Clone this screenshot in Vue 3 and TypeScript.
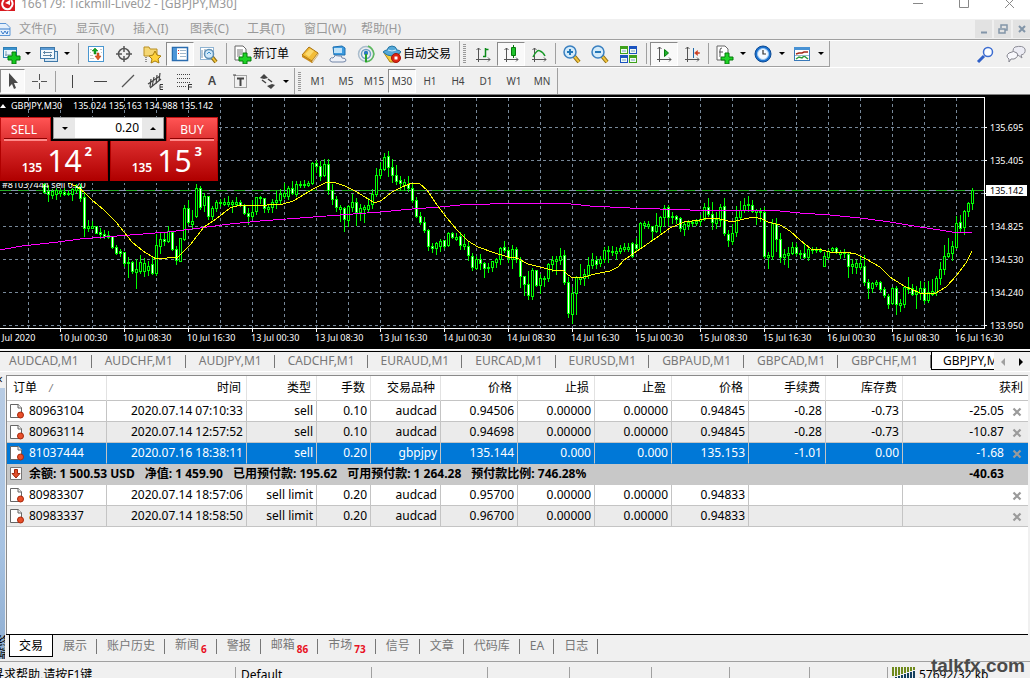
<script setup lang="ts">
import { ref } from 'vue'

interface Tool {
  kind: 'btn' | 'drop' | 'sep' | 'text'
  icon?: string
  label?: string
  cls?: string
}

const icons: Record<string, string> = {
  newChart:
    '<rect x="2.500" y="3.500" width="13" height="10" fill="#eef6fc" stroke="#2f7fb5"/><path d="M3 4h12v2h-12z" fill="#3c93cf"/><path d="M5 7v5M4 11h6" stroke="#7a9db5" fill="none"/><path d="M11 8h4v4h4v4h-4v4h-4v-4h-4v-4h4z" fill="#14c81e" stroke="#067a0c"/>',
  profiles:
    '<rect x="6.500" y="7.500" width="13" height="10" fill="#d3e6f5" stroke="#3f78a8"/><rect x="2.500" y="3.500" width="14" height="11" fill="#f4f9fd" stroke="#3f78a8"/><path d="M3 4h13v2h-13z" fill="#5b9bd5"/><path d="M5 8.500h9M5 11.500h9M6.500 7v3M12.500 10v3" stroke="#5f86a5"/>',
  market:
    '<rect x="2.500" y="2.500" width="15" height="15" fill="#fff" stroke="#4a97d0"/><path d="M4 5.500h2M4 8.500h1M4 11.500h3M4 14.500h4M14 5.500h2M15 8.500h1" stroke="#c4c4c4"/><path d="M9 4l3 3h-2v3h-2v-3h-2z" fill="#12a51f" stroke="#067a0c" stroke-width=".5"/><path d="M11 9h2v3h2l-3 4-3-4h2z" fill="#e2571e" stroke="#a5350c" stroke-width=".5"/>',
  cross:
    '<circle cx="10" cy="10" r="5.500" fill="none" stroke="#555" stroke-width="1.500"/><path d="M10 2v6M10 12v6M2 10h6M12 10h6" stroke="#555" stroke-width="1.500"/>',
  favorite:
    '<path d="M2 3h5l1 2h7v7h-13z" fill="#f5d774" stroke="#b98f22"/><path d="M4 13v5" stroke="#333" stroke-dasharray="1 1"/><path d="M13 7l2 4 4 1-3 3 1 4-4-2-4 2 1-4-3-3 4-1z" fill="#ffd23a" stroke="#a97f0c"/>',
  terminal:
    '<rect x="2.500" y="3.500" width="15" height="13" fill="#fff" stroke="#2a6db0" stroke-width="1.500"/><path d="M3 4h4v12h-4z" fill="#4d95d8"/><path d="M8 6.500h1M8 9.500h1" stroke="#d22"/><path d="M10 6.500h6M10 9.500h6M10 12.500h6" stroke="#9fb8cc"/>',
  tester:
    '<rect x="2.500" y="3.500" width="13" height="12" fill="#fff" stroke="#8fb3d1"/><path d="M4 6v8M7 5v5M13 5v3" stroke="#7a93a8"/><path d="M14 13l4 5" stroke="#8a6a10" stroke-width="4"/><path d="M14 13l4 5" stroke="#f1c33c" stroke-width="2"/><circle cx="11" cy="10" r="4.500" fill="#cfe8fa" stroke="#5d8fb5" stroke-width="1.500"/><path d="M9 10l2-2 2 2" stroke="#3b8ec9" fill="none"/>',
  order:
    '<path d="M3 2h8l3 3v11h-11z" fill="#fff" stroke="#666"/><path d="M5 6h6M5 8h6M5 10h5M5 12h3" stroke="#777"/><path d="M11 9h4v4h4v4h-4v3h-4v-3h-4v-4h4z" fill="#1fd326" stroke="#067a0c"/>',
  book:
    '<path d="M2 11l7-8 9 6-6 8z" fill="#f3bd38" stroke="#a8710f"/><path d="M2 11l10 6v2l-10-6z" fill="#c98a17"/><path d="M12 17l6-8v2l-6 8z" fill="#fff3cf" stroke="#a8710f" stroke-width=".5"/><path d="M5 10l5-5 4 2-5 6z" fill="#fbd96d"/>',
  cloud:
    '<path d="M5 3l9-1 3 2v7h-11z" fill="#3d9be0" stroke="#1d6fb0"/><path d="M6 4h8v5h-8z" fill="#bfe2f8"/><path d="M4 18q-3-1-2-3 1-2 3-1 2-4 6-2 3-1 3 2 4 0 4 2 0 2-3 2z" fill="#eef1f8" stroke="#7386a8"/>',
  signal:
    '<circle cx="10" cy="10" r="7.500" fill="none" stroke="#a9bccc" stroke-width="1.500"/><circle cx="10" cy="10" r="4.500" fill="none" stroke="#6fa0c4" stroke-width="1.500"/><path d="M10 10v8q7-1 8-8-1-6-6-8" fill="none" stroke="#5cba5c" stroke-width="1.500"/><circle cx="10" cy="9" r="2.200" fill="#2a7bbf"/><path d="M10 10v8" stroke="#28a428" stroke-width="2"/>',
  auto:
    '<path d="M2 9h16l-5 9h-5z" fill="#f5cf3d" stroke="#ad8212"/><path d="M1 8q2-2 4-2 1-4 5-4t5 4q3 0 4 2-4 4-9 4t-9-4z" fill="#55a9d8" stroke="#2576a5"/><path d="M6 6q4 2 8 0" stroke="#d7effc" fill="none"/><circle cx="14" cy="14" r="4.500" fill="#df2612" stroke="#a0150a"/><path d="M12.500 12.500h3v3h-3z" fill="#fff"/>',
  bars:
    '<path d="M5.500 4v14M3 15.500h14" stroke="#555"/><path d="M3.500 6l2-2 2 2M15 13.500l2 2-2 2" stroke="#555" fill="none"/><path d="M12.500 4v9M12.500 5.500h3M10 12.500h3" stroke="#0a8a18" stroke-width="1.500"/>',
  candles:
    '<path d="M5.500 4v14M3 15.500h14" stroke="#555"/><path d="M3.500 6l2-2 2 2M15 13.500l2 2-2 2" stroke="#555" fill="none"/><path d="M12.500 1v13" stroke="#067a0c"/><path d="M10.500 3.500h4v8h-4z" fill="#1fc32c" stroke="#067a0c"/>',
  line:
    '<path d="M5.500 4v14M3 15.500h14" stroke="#555"/><path d="M3.500 6l2-2 2 2M15 13.500l2 2-2 2" stroke="#555" fill="none"/><path d="M4 13q4-8 7-6 3 1 5 5" stroke="#1a9a2a" fill="none" stroke-width="1.500"/>',
  zoomIn:
    '<path d="M12 12l5 6" stroke="#8a6a10" stroke-width="4"/><path d="M12 12l5 6" stroke="#f1c33c" stroke-width="2"/><circle cx="8" cy="8" r="6" fill="#d4ebfa" stroke="#3a80c0" stroke-width="1.500"/><path d="M8 5v6M5 8h6" stroke="#2478b8" stroke-width="2"/>',
  zoomOut:
    '<path d="M12 12l5 6" stroke="#8a6a10" stroke-width="4"/><path d="M12 12l5 6" stroke="#f1c33c" stroke-width="2"/><circle cx="8" cy="8" r="6" fill="#d4ebfa" stroke="#3a80c0" stroke-width="1.500"/><path d="M5 8h6" stroke="#2478b8" stroke-width="2"/>',
  tile:
    '<path d="M2 2h8v8h-8zM11 11h8v8h-8z" fill="#3fa21c"/><path d="M11 2h8v8h-8zM2 11h8v8h-8z" fill="#1c54c0"/><path d="M3 5h6v4h-6zM12 5h6v4h-6zM3 14h6v4h-6zM12 14h6v4h-6z" fill="#f2fbf2"/><path d="M4 7h4M13 7h4M4 16h4M13 16h4" stroke="#79a0c4"/>',
  scroll:
    '<path d="M5.500 3v15M3 15.500h14" stroke="#555"/><path d="M3.500 5l2-2 2 2M15 13.500l2 2-2 2" stroke="#555" fill="none"/><path d="M10.500 5.500l4 3.500-4 3.500z" fill="#1fb32c" stroke="#067a0c"/>',
  shift:
    '<path d="M5.500 3v15M3 15.500h14" stroke="#555"/><path d="M3.500 5l2-2 2 2M15 13.500l2 2-2 2" stroke="#555" fill="none"/><path d="M11.500 4v10" stroke="#1f68a8"/><path d="M12.500 9l3-2.500v2h2v1h-2v2z" fill="#c9381b" stroke="#c9381b" stroke-width=".5"/>',
  indicator:
    '<path d="M3 2h8l3 3v11h-11z" fill="#fff" stroke="#666"/><path d="M6 13v-7q0-2 2-2M5 8h4" stroke="#555" fill="none"/><path d="M11 9h4v4h4v3h-4v4h-4v-4h-4v-3h4z" fill="#1fd326" stroke="#067a0c"/>',
  clock:
    '<circle cx="10" cy="10" r="8" fill="#1b72d0" stroke="#0c4a94"/><circle cx="10" cy="10" r="5.500" fill="#f3f9ff" stroke="#9cc8f2"/><path d="M10 6v4h3" stroke="#333" fill="none" stroke-width="1.200"/>',
  template:
    '<rect x="2.500" y="3.500" width="15" height="13" fill="#fff" stroke="#3878b8"/><path d="M2 3h16v3h-16z" fill="#4892d4"/><path d="M4 10l3-1 3 0 2-1 4 0" stroke="#a32a1a" fill="none" stroke-width="1.500"/><path d="M4 15l3-2 3 1 2-2 4 3" stroke="#2a9a3a" fill="none" stroke-width="1.500"/><path d="M3 11.500h14" stroke="#9bc"/>',
  arrow: '<path d="M6 2v14l3-3 2 5 2-1-2-5h4z" fill="#4a4a4a"/>',
  crosshair: '<path d="M10.500 3v6M10.500 12v6M3 10.500h6M12 10.500h6" stroke="#555"/>',
  vline: '<path d="M10.500 4v13" stroke="#444"/>',
  hline: '<path d="M4 10.500h13" stroke="#444"/>',
  trend: '<path d="M4 16l12-12" stroke="#555" stroke-width="1.200"/>',
  channel:
    '<path d="M2 13l12-8M4 17l11-9M5 8l-1 8M8 6l-2 10M11 4l-1 9M14 2l-1 8" stroke="#444" stroke-width="1.200"/><path d="M17 13.500h-3v5h3M14 16h3" stroke="#333" fill="none"/>',
  fib:
    '<path d="M3 3.500h14M3 7.500h14M3 11.500h14M3 15.500h9" stroke="#444" stroke-dasharray="1 1"/><path d="M18 13.500h-3.500v5.500M15 16h3" stroke="#333" fill="none"/>',
  label:
    '<rect x="4.500" y="4.500" width="12" height="12" fill="none" stroke="#555" stroke-dasharray="1 1"/><path d="M7 7.500h7M10.500 7v8" stroke="#444" stroke-width="2"/><path d="M3 4h3" stroke="#444"/>',
  arrows:
    '<path d="M3 7l4-4 4 4-4 1z" fill="#444"/><path d="M10 15l5-2 3 1-4 4z" fill="#444"/><path d="M5 9l4 3M11 8l4 3" stroke="#444" stroke-width="1.500"/>',
  search:
    '<path d="M8 12l-6 6" stroke="#2f60c8" stroke-width="3"/><circle cx="12" cy="8" r="4.500" fill="#fbfdff" stroke="#3c6cd0" stroke-width="1.500"/>',
  chat:
    '<path d="M9 3q8-2 10 2 1 5-4 6l1 3-4-3q-5-1-5-4 0-3 2-4z" fill="#ececf4" stroke="#8c8c96"/><path d="M3 9q5-3 8 0 2 4-3 6h-3l-2 3v-3q-4-3 0-6z" fill="#f8f8fc" stroke="#85858f"/>',
}

const btn = (icon: string, cls = ''): Tool => ({ kind: 'btn', icon, cls })
const drop: Tool = { kind: 'drop' }
const sep: Tool = { kind: 'sep' }

const standardTools: Tool[] = [
  btn('newChart', 'narrow'), drop, btn('profiles', 'mid'), drop, sep,
  btn('market'), btn('cross'), btn('favorite'), btn('terminal', 'pressed'), btn('tester'), sep,
  { kind: 'text', icon: 'order', label: '新订单' },
  btn('book'), btn('cloud'), btn('signal'),
  { kind: 'text', icon: 'auto', label: '自动交易' },
]
const chartTools: Tool[] = [
  btn('bars'), btn('candles', 'pressed'), btn('line'), { kind: 'sep', cls: 'tight' },
  btn('zoomIn'), btn('zoomOut'), btn('tile'), sep,
  btn('scroll', 'pressed'), btn('shift'), { kind: 'sep', cls: 'tight' },
  btn('indicator', 'mid'), drop, btn('clock', 'mid'), drop, btn('template', 'mid'), drop,
]
const drawTools: Tool[] = [
  btn('arrow', 'mid pressed'), btn('crosshair'), { kind: 'sep', cls: 'tight' },
  btn('vline'), btn('hline'), btn('trend'), btn('channel'), btn('fib'),
  { kind: 'text', label: 'A', cls: 'letter' }, btn('label'), btn('arrows', 'mid'), drop,
]

const menus = ['文件(F)', '显示(V)', '插入(I)', '图表(C)', '工具(T)', '窗口(W)', '帮助(H)']
const frames = ['M1', 'M5', 'M15', 'M30', 'H1', 'H4', 'D1', 'W1', 'MN']
const frame = ref('M30')
const lots = ref('0.20')

/* Candles: high, open/close top, open/close bottom, low, 1 = rising, 0 = falling */
const STEP = 4
const FIRST_X = 44
const candleRows = `
88 89 97 98 0|90 96 99 106 0|94 96 100 103 1|93 95 99 104 1|94 96 98 101 1|93 97 99 100 0|95 98 99 100 1|93 94 99 105 1
89 91 95 97 1|89 91 103 106 0|98 102 133 141 0|125 131 133 136 1|126 131 133 133 1|131 131 138 138 0|133 137 139 143 0|135 139 141 143 0
136 140 142 143 0|141 141 152 153 0|150 152 158 159 0|154 156 158 161 0|157 157 168 171 0|162 167 168 182 0|166 167 176 178 0|164 174 177 193 1
160 167 176 178 1|163 168 176 181 1|166 171 175 180 1|162 169 178 179 0|139 150 178 180 1|137 144 151 158 1|137 144 146 150 0|131 136 146 147 1
136 137 154 155 0|151 154 165 169 0|143 143 166 166 1|110 113 144 145 1|105 113 127 129 0|115 126 129 134 1|89 93 121 122 1|91 93 112 114 0
98 101 110 116 1|101 101 121 124 0|111 113 121 124 1|105 107 113 116 1|104 107 108 111 1|103 107 109 110 1|101 107 109 111 1|105 107 109 117 1
102 107 109 110 1|105 107 110 111 0|109 110 118 119 0|113 118 121 129 0|105 117 121 123 1|102 102 116 119 1|101 102 103 108 1|103 103 113 117 0
110 112 114 117 1|104 107 112 117 1|96 105 107 113 1|94 99 105 108 1|88 98 101 103 1|91 93 101 104 1|86 93 98 99 0|86 89 99 101 1
86 89 90 92 1|85 89 90 92 1|86 88 90 91 1|67 68 88 89 1|65 68 71 77 0|66 71 81 85 0|64 69 80 81 1|64 69 95 99 0
89 95 104 109 0|101 104 112 116 0|110 112 114 126 1|112 113 124 136 0|110 111 125 131 1|99 107 112 116 1|103 107 117 130 0|109 113 117 125 1
110 112 114 127 1|103 110 114 117 1|94 99 109 113 1|73 80 99 101 1|67 74 80 83 1|58 62 74 75 1|56 61 72 81 0|64 72 80 87 0
70 80 86 89 0|81 85 88 95 0|84 87 90 95 1|81 89 93 96 0|89 93 105 107 0|102 105 121 122 0|117 121 127 129 0|122 127 135 137 0
134 135 151 155 0|148 151 153 157 0|147 148 153 159 1|144 146 151 156 1|145 145 151 153 0|137 138 150 151 1|137 138 142 143 0|138 142 144 145 1
137 141 150 154 0|139 149 151 154 1|147 151 160 165 0|158 161 172 175 0|161 164 173 174 1|159 164 168 174 0|167 168 173 182 0|168 172 173 177 1
166 166 172 176 1|163 164 167 172 1|152 153 164 169 1|146 152 155 157 0|152 155 163 167 0|150 154 164 173 1|152 154 164 167 0|162 165 181 192 0
181 181 189 200 0|176 189 200 204 0|173 175 201 204 1|175 175 190 191 0|179 183 190 198 1|181 183 184 191 1|168 169 183 186 1|161 165 169 176 1
161 164 166 179 1|153 161 165 169 1|155 160 187 189 0|182 187 218 222 0|192 198 219 228 1|181 182 198 219 1|169 182 184 189 1|174 179 183 190 1
162 170 180 183 1|158 165 170 173 1|161 165 169 173 0|161 164 168 171 1|152 155 164 167 1|151 155 156 167 1|151 156 157 160 1|152 156 158 164 1
150 153 156 158 1|148 152 154 156 1|148 152 154 156 1|147 148 161 162 0|143 149 153 156 0|127 128 153 153 1|126 128 130 133 1|126 129 131 133 1
131 131 136 145 0|118 130 136 137 1|121 122 131 137 1|110 113 122 131 1|110 112 122 130 0|117 121 122 128 1|120 121 124 128 0|122 123 133 136 0
127 129 134 140 1|125 127 130 134 1|125 127 128 131 1|124 126 128 130 1|120 124 126 130 1|108 112 124 125 1|103 112 119 121 0|107 119 127 134 0
117 124 128 133 1|109 112 125 131 1|103 111 138 140 0|135 139 145 151 0|129 138 146 149 1|111 122 137 141 1|106 115 122 123 1|103 110 115 117 1
101 109 110 116 1|105 110 116 117 0|114 115 117 129 1|113 116 117 126 1|112 117 161 163 0|157 160 162 173 1|124 128 161 164 1|123 129 144 156 0
138 144 162 167 0|154 159 162 169 1|152 158 160 172 1|147 152 158 159 1|148 152 158 160 0|155 158 159 163 1|149 158 162 163 0|153 154 162 165 1
152 154 155 158 1|152 154 155 157 1|153 155 156 157 1|157 161 171 171 1|154 156 162 164 1|152 153 155 157 1|152 153 157 158 0|155 157 159 163 1
154 157 158 162 1|158 159 171 182 0|164 169 171 178 1|165 168 172 178 1|162 168 172 174 1|160 171 187 190 0|184 187 193 203 0|187 188 193 197 1
185 187 189 191 1|186 187 194 196 0|192 194 200 202 0|199 201 209 213 0|192 193 208 209 1|191 193 209 219 0|204 208 210 216 1|191 192 209 212 1
182 192 194 198 1|189 193 199 200 0|191 197 199 213 1|186 193 198 204 1|187 193 205 208 0|186 197 205 207 1|184 196 199 200 1|181 183 197 200 1
167 174 183 189 1|150 161 174 179 1|143 158 161 162 1|146 151 158 165 1|121 128 152 153 1|120 127 133 137 0|115 116 132 139 1|107 108 116 121 1
93 95 108 114 1`
const candles = candleRows
  .trim()
  .split(/[|\n]/)
  .map((row, i) => {
    const [high, top, bottom, low, up] = row.split(' ').map(Number)
    return { x: FIRST_X + i * STEP, high, top, bottom, low, up: up === 1 }
  })

const fastAverage =
  '68,88 76,91 84,97 92,105 104,115 116,127 124,137 132,147 143,156 156,164 178,162 190,150 204,132 216,124 230,113 240,110 252,111 283,109 293,106 305,99 315,93 325,88 333,87 345,91 357,97 368,104 375,108 382,105 392,97 402,92 412,88 420,89 427,95 437,110 447,123 457,135 468,146 478,152 492,157 508,162 517,163 528,169 540,172 552,175 563,175 568,180 573,183 584,182 595,179 610,176 618,172 624,165 640,154 656,143 670,133 684,127 700,125 708,123 720,124 732,127 744,124 754,122 762,124 768,127 780,130 790,136 800,145 811,154 822,155 830,157 845,157 856,159 866,164 880,172 890,182 904,191 920,198 934,199 946,192 957,180 966,168 972,156'
const slowAverage =
  '0,155 22,151 58,147 80,144 130,140 168,137 200,133 230,129 260,126 300,123 340,120 380,117 412,114 440,112 460,110 490,109 512,108 562,108 590,111 630,113 660,114 690,115 730,115 770,115 800,118 830,120 860,123 890,127 920,132 940,135 952,137 972,138'

const gridX = Array.from({ length: 30 }, (_, i) => 28 + i * 32)
const prices = ['135.695', '135.405', '', '134.825', '134.530', '134.240', '133.950'].map((text, i) => ({
  text,
  y: 32 + i * 33,
}))
const dates = [
  '10 Jul 00:30', '10 Jul 08:30', '10 Jul 16:30', '13 Jul 00:30', '13 Jul 08:30', '13 Jul 16:30',
  '14 Jul 00:30', '14 Jul 08:30', '14 Jul 16:30', '15 Jul 00:30', '15 Jul 08:30', '15 Jul 16:30',
  '16 Jul 00:30', '16 Jul 08:30', '16 Jul 16:30',
].map((text, i) => ({ text, x: 59 + i * 64 }))

const chartTabs = [
  'AUDCAD,M1', 'AUDCHF,M1', 'AUDJPY,M1', 'CADCHF,M1', 'EURAUD,M1', 'EURCAD,M1',
  'EURUSD,M1', 'GBPAUD,M1', 'GBPCAD,M1', 'GBPCHF,M1',
]

const columns = ['时间', '类型', '手数', '交易品种', '价格', '止损', '止盈', '价格', '手续费', '库存费', '获利']

interface Order {
  id: string
  cells: string[]
  fees?: string[]
  profit?: string
  selected?: boolean
}
const openOrders: Order[] = [
  { id: '80963104', cells: ['2020.07.14 07:10:33', 'sell', '0.10', 'audcad', '0.94506', '0.00000', '0.00000', '0.94845'], fees: ['-0.28', '-0.73'], profit: '-25.05' },
  { id: '80963114', cells: ['2020.07.14 12:57:52', 'sell', '0.10', 'audcad', '0.94698', '0.00000', '0.00000', '0.94845'], fees: ['-0.28', '-0.73'], profit: '-10.87' },
  { id: '81037444', cells: ['2020.07.16 18:38:11', 'sell', '0.20', 'gbpjpy', '135.144', '0.000', '0.000', '135.153'], fees: ['-1.01', '0.00'], profit: '-1.68', selected: true },
]
const pendingOrders: Order[] = [
  { id: '80983307', cells: ['2020.07.14 18:57:06', 'sell limit', '0.20', 'audcad', '0.95700', '0.00000', '0.00000', '0.94833'] },
  { id: '80983337', cells: ['2020.07.14 18:58:50', 'sell limit', '0.20', 'audcad', '0.96700', '0.00000', '0.00000', '0.94833'] },
]
const summary = ['余额: 1 500.53 USD', '净值: 1 459.90', '已用预付款: 195.62', '可用预付款: 1 264.28', '预付款比例: 746.28%']

const terminalTabs = [
  { name: '展示' }, { name: '账户历史' }, { name: '新闻', badge: '6' }, { name: '警报' },
  { name: '邮箱', badge: '86' }, { name: '市场', badge: '73' }, { name: '信号' }, { name: '文章' },
  { name: '代码库' }, { name: 'EA' }, { name: '日志' },
]
</script>

<template>
  <div class="app">
    <header class="title-bar">
      <svg class="logo" viewBox="0 0 15 11" aria-hidden="true">
        <path d="M0 0h15v11h-15z" fill="#d8191f" />
        <path d="M4 0a5 5 0 0 0 7 8M11 0a5 5 0 0 1-1 8" fill="none" stroke="#fff" stroke-width="2" />
        <path d="M5 3l5-3v5z" fill="#fff" />
      </svg>
      <span class="title">166179: Tickmill-Live02 - [GBPJPY,M30]</span>
      <button class="win" aria-label="Minimize"><svg viewBox="0 0 12 10"><path d="M1 3.500h10" stroke="#888" /></svg></button>
      <button class="win" aria-label="Maximize"><svg viewBox="0 0 12 10"><path d="M1.500-2v9.500h9v-9.500" fill="none" stroke="#888" /></svg></button>
      <button class="win" aria-label="Close"><svg viewBox="0 0 12 10"><path d="M1 8l9-9M1-1l9 9" stroke="#888" /></svg></button>
    </header>

    <nav class="menu-bar">
      <svg class="doc-icon" viewBox="0 0 11 14" aria-hidden="true">
        <path d="M0 1.500h6l4 4v8h-10" fill="#e4f0fc" stroke="#5b95d5" />
        <path d="M0 7h10M1 9l2 3 2-3 2 3 1-3" fill="none" stroke="#3478c8" />
      </svg>
      <button v-for="m in menus" :key="m" class="menu">{{ m }}</button>
      <div class="mdi">
        <button aria-label="Minimize chart"><svg viewBox="0 0 12 12"><path d="M3 9.500h6" stroke="#8295a8" stroke-width="2" /></svg></button>
        <button aria-label="Restore chart"><svg viewBox="0 0 12 12"><path d="M2 6h6v4h-6zM4 5v-3h6v5h-2" fill="none" stroke="#8295a8" stroke-width="1.500" /></svg></button>
        <button aria-label="Close chart"><svg viewBox="0 0 12 12"><path d="M3 3l6 6M9 3l-6 6" stroke="#8295a8" stroke-width="2" /></svg></button>
      </div>
    </nav>

    <div class="bar-row top-row">
      <div v-for="(group, g) in [standardTools, chartTools]" :key="g" class="bar">
        <span v-if="g > 0" class="grip"></span>
        <template v-for="(t, i) in group" :key="i">
          <span v-if="t.kind === 'sep'" class="sep" :class="t.cls"></span>
          <button v-else-if="t.kind === 'drop'" class="drop" aria-label="More"></button>
          <button v-else class="tool" :class="[t.cls, { wide: t.kind === 'text' }]" :aria-label="t.label || t.icon">
            <svg v-if="t.icon" viewBox="0 0 20 20" v-html="icons[t.icon]"></svg>
            <span v-if="t.label">{{ t.label }}</span>
          </button>
        </template>
      </div>
      <div class="side">
        <button class="tool" aria-label="Search"><svg viewBox="0 0 20 20" v-html="icons.search"></svg></button>
        <button class="tool" aria-label="Chat"><svg viewBox="0 0 20 20" v-html="icons.chat"></svg></button>
      </div>
    </div>

    <div class="bar-row">
      <div class="bar">
        <template v-for="(t, i) in drawTools" :key="i">
          <span v-if="t.kind === 'sep'" class="sep" :class="t.cls"></span>
          <button v-else-if="t.kind === 'drop'" class="drop" aria-label="More"></button>
          <button v-else class="tool" :class="t.cls" :aria-label="t.label || t.icon">
            <svg v-if="t.icon" viewBox="0 0 20 20" v-html="icons[t.icon]"></svg>
            <span v-if="t.label">{{ t.label }}</span>
          </button>
        </template>
      </div>
      <div class="bar">
        <span class="grip"></span>
        <button v-for="f in frames" :key="f" class="tool frame" :class="{ pressed: f === frame }" @click="frame = f">{{ f }}</button>
      </div>
    </div>

    <main class="chart">
      <svg class="plot" viewBox="0 0 1030 254" role="img" aria-label="GBPJPY M30">
        <g class="grid" shape-rendering="crispEdges">
          <line v-for="x in gridX" :key="'x' + x" :x1="x + 0.5" y1="3" :x2="x + 0.5" y2="233" />
          <line v-for="p in prices" :key="'y' + p.y" x1="3" :y1="p.y + 0.5" x2="984" :y2="p.y + 0.5" />
        </g>
        <g shape-rendering="crispEdges">
          <line x1="0" y1="95.500" x2="984" y2="95.500" stroke="#8296a8" />
          <line x1="0" y1="95.500" x2="984" y2="95.500" stroke="#22b022" stroke-dasharray="11 7" />
        </g>
        <g shape-rendering="crispEdges">
          <template v-for="c in candles" :key="c.x">
            <rect :x="c.x" :y="c.high" width="1" :height="c.low - c.high + 1" fill="#0f0" />
            <rect :x="c.x - 1" :y="c.top" width="3" :height="c.bottom - c.top + 1" fill="#0f0" />
            <rect v-if="c.bottom - c.top > 1" :x="c.x" :y="c.top + 1" width="1" :height="c.bottom - c.top - 1" :fill="c.up ? '#000' : '#fff'" />
          </template>
        </g>
        <polyline :points="slowAverage" fill="none" stroke="#f0f" stroke-width="1" shape-rendering="crispEdges" />
        <polyline :points="fastAverage" fill="none" stroke="#ff0" stroke-width="1" shape-rendering="crispEdges" />
        <g class="frame-lines" shape-rendering="crispEdges">
          <path d="M0 2.500H984.500V233.500H0" fill="none" />
          <line v-for="p in prices" :key="p.y" x1="984" :y1="p.y + 0.5" x2="987" :y2="p.y + 0.5" />
          <line v-for="d in dates" :key="d.x" :x1="d.x + 1.5" y1="233" :x2="d.x + 1.5" y2="237" />
        </g>
        <path d="M0 13l3-4 3 4z" fill="#fff" />
        <text x="11" y="14">GBPJPY,M30</text>
        <text x="73" y="14">135.024 135.163 134.988 135.142</text>
        <text x="2" y="93">#81037444 sell 0.20</text>
        <text v-for="p in prices" :key="p.y" x="990" :y="p.y + 4">{{ p.text }}</text>
        <rect x="986" y="90" width="41" height="11" fill="#fff" />
        <text x="990" y="99" class="bid">135.142</text>
        <text x="2" y="246">Jul 2020</text>
        <text v-for="d in dates" :key="d.text" :x="d.x" y="246">{{ d.text }}</text>
      </svg>

      <section class="trade">
        <div class="trade-top">
          <button class="side-btn">SELL</button>
          <div class="lots">
            <button class="step down" aria-label="Decrease"></button>
            <input v-model="lots" size="4" aria-label="Volume" />
            <button class="step up" aria-label="Increase"></button>
          </div>
          <button class="side-btn">BUY</button>
        </div>
        <div class="quotes">
          <div class="quote"><span>135</span><strong>14</strong><sup>2</sup></div>
          <div class="quote"><span>135</span><strong>15</strong><sup>3</sup></div>
        </div>
      </section>
    </main>

    <nav class="chart-tabs">
      <div class="tab-list">
        <button v-for="t in chartTabs" :key="t">{{ t }}</button>
        <button class="active">GBPJPY,M30</button>
      </div>
      <button class="scroll left" aria-label="Scroll left"></button>
      <button class="scroll right" aria-label="Scroll right"></button>
    </nav>

    <section class="terminal">
      <aside class="dock"><span class="dock-close">×</span><div class="dock-title">终端</div></aside>
      <div class="terminal-body">
        <div class="orders">
          <table>
            <colgroup>
              <col class="c-order" /><col class="c-time" /><col class="c-type" /><col class="c-lots" /><col class="c-type" />
              <col v-for="n in 6" :key="n" class="c-num" /><col />
            </colgroup>
            <thead>
              <tr>
                <th class="first">订单<i>/</i></th>
                <th v-for="(c, i) in columns" :key="i">{{ c }}</th>
              </tr>
            </thead>
            <tbody>
              <template v-for="(group, g) in [openOrders, pendingOrders]" :key="g">
                <tr v-for="(o, r) in group" :key="o.id" :class="{ alt: r === 1, selected: o.selected }">
                  <td class="first">
                    <svg class="row-icon" viewBox="0 0 14 16" aria-hidden="true">
                      <path d="M.500 1.500h8l3 3v10h-11z" fill="#fff" stroke="#666" />
                      <path d="M8 1v4h4" fill="#eee" stroke="#666" />
                      <circle cx="10.500" cy="12" r="3" fill="#e8502a" stroke="#a8280c" />
                    </svg>{{ o.id }}
                  </td>
                  <td v-for="(c, i) in o.cells" :key="i">{{ c }}</td>
                  <template v-if="o.fees"><td v-for="(f, i) in o.fees" :key="i">{{ f }}</td></template>
                  <td v-else colspan="2"></td>
                  <td class="profit">
                    {{ o.profit }}
                    <button aria-label="Close order"><svg viewBox="0 0 10 10"><path d="M1.500 1.500l7 7M8.500 1.500l-7 7" stroke="#9a9a9a" stroke-width="2.200" /></svg></button>
                  </td>
                </tr>
                <tr v-if="g === 0" class="summary">
                  <td class="first" colspan="11">
                    <svg class="row-icon" viewBox="0 0 14 16" aria-hidden="true">
                      <path d="M.500 1.500h11v12h-11z" fill="#fff" stroke="#777" />
                      <path d="M4.500 3.500h3v4h2.500l-4 4.500-4-4.500h2.500z" fill="#e2502a" stroke="#a02a10" />
                    </svg><span v-for="s in summary" :key="s">{{ s }}</span>
                  </td>
                  <td class="profit">
                    -40.63
                    <span class="blank"></span>
                  </td>
                </tr>
              </template>
            </tbody>
          </table>
        </div>
        <nav class="term-tabs">
          <button class="active">交易</button>
          <button v-for="t in terminalTabs" :key="t.name">{{ t.name }}<small v-if="t.badge">{{ t.badge }}</small></button>
        </nav>
      </div>
    </section>

    <footer class="status">
      <span class="help">寻求帮助,请按F1键</span>
      <span class="s-136">Default</span>
      <span class="s-116"></span>
      <span class="s-82"></span>
      <span class="s-82"></span>
      <span class="s-78"></span>
      <span class="s-80"></span>
      <span class="s-78"></span>
      <span class="traffic">
        <svg viewBox="0 0 24 13" aria-hidden="true" shape-rendering="crispEdges">
          <path d="M1 0v9M4 0v9M7 0v8M10 0v7M13 0v6M16 0v5M19 0v4M22 0v3" stroke="#6f8a1c" stroke-width="2" />
          <path d="M4 10v3M7 9v4M10 8v5M13 7v6M16 6v7M19 5v8M22 4v9" stroke="#14405f" stroke-width="2" />
        </svg>57692/32 kb
      </span>
      <span class="watermark">talkfx.com</span>
    </footer>
  </div>
</template>

<style>
body {
  margin: 0;
  overflow: hidden;
}
</style>

<style scoped>
.app {
  display: flex;
  flex-direction: column;
  height: 100vh;
  overflow: hidden;
  background: #f0f0f0;
  color: #000;
  font: 12px/16px "Noto Sans", "Noto Sans CJK SC", sans-serif;
}
* {
  box-sizing: border-box;
}
button,
input {
  margin: 0;
  padding: 0;
  border: 0;
  border-radius: 0;
  background: none;
  color: inherit;
  font: inherit;
}
svg {
  display: block;
  flex: none;
}

/* Title and menu */
.title-bar {
  display: flex;
  align-items: flex-start;
  flex: none;
  height: 19px;
  background: #fff;
  color: #999;
  overflow: hidden;
}
.logo {
  width: 15px;
  height: 11px;
  margin-right: 6px;
}
.title {
  flex: 1;
  line-height: 8px;
  white-space: nowrap;
}
.win {
  width: 46px;
  padding-left: 20px;
}
.win svg {
  width: 12px;
  height: 10px;
}
.menu-bar {
  display: flex;
  align-items: center;
  flex: none;
  height: 21px;
  border-bottom: 1px solid #a0a0a0;
  color: #999;
}
.doc-icon {
  width: 11px;
  height: 14px;
}
.menu {
  width: 57px;
  padding-left: 8px;
  text-align: left;
  white-space: nowrap;
}
.mdi {
  display: flex;
  gap: 2px;
  margin-left: auto;
}
.mdi button {
  display: flex;
  align-items: center;
  justify-content: center;
  width: 17px;
  height: 18px;
  background: #e2e2e2;
}
.mdi svg {
  width: 12px;
  height: 12px;
}

/* Toolbars */
.bar-row {
  display: flex;
  flex: none;
  height: 27px;
  border-top: 1px solid #fff;
}
.bar {
  display: flex;
  align-items: center;
  height: 26px;
  padding-right: 1px;
  border-right: 1px solid #a0a0a0;
}
.top-row .bar {
  border-bottom: 1px solid #a0a0a0;
}
.tool {
  display: flex;
  align-items: center;
  justify-content: center;
  flex: none;
  width: 28px;
  height: 24px;
  color: #444;
}
.tool svg {
  width: 20px;
  height: 20px;
}
.tool.narrow {
  width: 21px;
}
.tool.mid {
  width: 25px;
}
.tool.wide {
  width: auto;
  gap: 1px;
  padding: 0 7px 0 2px;
  color: #000;
}
.tool.pressed {
  border: 1px solid;
  border-color: #8a8a8a #fff #fff #8a8a8a;
  background: #f9f9f9;
}
.tool.frame {
  font-size: 10px;
}
.tool.letter {
  font-weight: 600;
}
.drop {
  flex: none;
  width: 14px;
  height: 24px;
}
.drop::before {
  content: "";
  display: block;
  width: 0;
  margin: 0 auto;
  border: 3px solid transparent;
  border-top-color: #000;
  border-bottom: 0;
}
.sep {
  flex: none;
  width: 8px;
  height: 21px;
  background: linear-gradient(#a0a0a0, #a0a0a0) center / 1px 100% no-repeat;
}
.sep.tight {
  width: 5px;
}
.grip {
  width: 3px;
  height: 19px;
  margin: 0 3px;
  background: repeating-linear-gradient(#999 0 1px, #f0f0f0 1px 2px);
}
.side {
  display: flex;
  align-items: center;
  gap: 2px;
  margin-left: auto;
}

/* Chart */
.chart {
  position: relative;
  flex: none;
  border-top: 1px solid #808080;
  border-bottom: 1px solid #fff;
  margin-bottom: 1px;
  background: #000;
}
.plot {
  width: 100%;
  height: auto;
}
.plot text {
  fill: #fff;
  font-size: 9px;
}
.plot .bid {
  fill: #000;
}
.grid line {
  stroke: #778899;
  stroke-dasharray: 3 3;
}
.frame-lines {
  stroke: #fff;
}
.trade {
  position: absolute;
  top: 22px;
  left: 0;
  width: 218px;
  padding-bottom: 2px;
  background: #000;
  color: #fff;
}
.trade-top {
  display: flex;
  gap: 2px;
}
.side-btn {
  position: relative;
  flex: none;
  width: 52px;
  height: 24px;
  border: 1px solid #c01010;
  border-bottom: 0;
  background: linear-gradient(#ff5454, #dd3030);
}
.side-btn:first-child {
  width: 51px;
  padding-right: 3px;
}
.side-btn::after {
  content: "";
  position: absolute;
  right: 3px;
  bottom: 0;
  left: 3px;
  height: 2px;
  border-top: 1px solid #8d0000;
  background: #ff8a8a;
}
.lots {
  display: flex;
  flex: 1;
  min-width: 0;
  height: 22px;
  border: 1px solid #999;
}
.lots input {
  flex: 1;
  min-width: 0;
  padding-right: 3px;
  background: #fff;
  color: #000;
  text-align: right;
}
.step {
  flex: none;
  width: 21px;
  background: #e8e8e8;
}
.step::before {
  content: "";
  display: block;
  width: 0;
  margin: 0 auto;
  border: 3px solid transparent;
}
.step.down::before {
  border-top-color: #000;
  border-bottom: 0;
}
.step.up::before {
  border-bottom-color: #000;
  border-top: 0;
}
.quotes {
  display: grid;
  grid-template-columns: 1fr 1fr;
  gap: 2px;
}
.quote {
  display: flex;
  align-items: baseline;
  justify-content: flex-end;
  height: 40px;
  padding-right: 15px;
  border: 1px solid #b00000;
  border-top: 0;
  background: linear-gradient(#dd2e2e, #b00000);
  line-height: 40px;
}
.quote span {
  font-weight: 600;
}
.quote strong {
  margin: 0 3px 0 5px;
  font-size: 30px;
  font-weight: 400;
}
.quote sup {
  align-self: flex-start;
  font-size: 13px;
  font-weight: 700;
  line-height: 20px;
}

/* Chart tabs */
.chart-tabs {
  display: flex;
  flex: none;
  height: 21px;
  border-top: 1px solid #000;
  border-bottom: 1px solid #fff;
  color: #777;
}
.tab-list {
  display: flex;
  flex: 1;
  min-width: 0;
  overflow: hidden;
}
.tab-list button {
  position: relative;
  flex: none;
  height: 18px;
  padding: 0 13px;
  white-space: nowrap;
}
.tab-list button:first-child {
  padding-left: 9px;
}
.tab-list button::after {
  content: "";
  position: absolute;
  top: 3px;
  right: 0;
  width: 1px;
  height: 13px;
  background: #777;
}
.tab-list .active {
  padding-left: 11px;
  border: 1px solid #000;
  border-top: 0;
  background: #fff;
  color: #000;
}
.scroll {
  width: 18px;
}
.scroll::before {
  content: "";
  display: block;
  width: 0;
  margin: 0 auto;
  border: 4px solid transparent;
}
.scroll.left::before {
  border-right-color: #a0a0a0;
  border-left: 0;
}
.scroll.right::before {
  border-left-color: #000;
  border-right: 0;
}

/* Terminal */
.terminal {
  display: flex;
  flex: 1;
  min-height: 0;
  padding: 3px 2px 2px 0;
  border-bottom: 1px solid #a0a0a0;
}
.dock {
  display: flex;
  flex-direction: column;
  width: 5px;
  margin-right: 1px;
  overflow: hidden;
}
.dock-close {
  height: 13px;
  line-height: 10px;
  text-indent: -4px;
}
.dock-title {
  flex: 1;
  width: 5px;
  background: linear-gradient(#b8cce4, #a6c2e2 60%, #8eadd0);
  line-height: 5px;
  text-align: right;
  writing-mode: vertical-rl;
}
.terminal-body {
  display: flex;
  flex: 1;
  flex-direction: column;
  min-width: 0;
}
.orders {
  flex: 1;
  border-top: 1px solid #8a8a8a;
  border-left: 1px solid #8a8a8a;
  background: #fff;
}
table {
  width: 100%;
  border-collapse: separate;
  border-spacing: 0;
  table-layout: fixed;
}
.c-order {
  width: 100px;
}
.c-time {
  width: 140px;
}
.c-type {
  width: 70px;
}
.c-lots {
  width: 54px;
}
.c-num {
  width: 77px;
}
th,
td {
  padding: 0 3px 0 0;
  border-right: 1px solid #c4c4c4;
  border-bottom: 1px solid #c4c4c4;
  text-align: right;
  white-space: nowrap;
}
th {
  height: 25px;
  padding-right: 5px;
  border-right-color: #e2e2e2;
  font-weight: 400;
}
td {
  height: 21px;
}
.first {
  padding-left: 3px;
  text-align: left;
}
th.first {
  padding-left: 6px;
}
th.first i {
  margin-left: 12px;
  color: #777;
  font-size: 10px;
}
.row-icon {
  display: inline-block;
  width: 14px;
  height: 16px;
  margin-right: 5px;
  vertical-align: middle;
}
.profit button,
.blank {
  display: inline-block;
  width: 10px;
  height: 10px;
  margin: 0 3px 0 5px;
  vertical-align: middle;
}
tr > :last-child {
  border-right: 0;
}
.alt td {
  background: #ebebeb;
}
.selected td {
  border-bottom-color: #0078d7;
  background: #0078d7;
  color: #fff;
}
.summary td {
  border-color: #c8c8c8;
  background: #c8c8c8;
  font-weight: 700;
}
.summary .first span {
  margin-right: 10px;
}
.term-tabs {
  display: flex;
  flex: none;
  height: 25px;
  padding-left: 3px;
  border-top: 1px solid #000;
  color: #777;
}
.term-tabs button {
  position: relative;
  height: 21px;
  padding: 0 10px;
  white-space: nowrap;
}
.term-tabs button::after {
  content: "";
  position: absolute;
  top: 4px;
  right: 0;
  width: 1px;
  height: 15px;
  background: #777;
}
.term-tabs .active {
  height: 22px;
  padding: 0 9px;
  border: 1px solid #000;
  border-top: 0;
  background: #fff;
  color: #000;
}
.term-tabs .active::after,
.tab-list .active::after {
  display: none;
}
.term-tabs small {
  margin-left: 2px;
  color: #e81123;
  font-size: 10px;
  font-weight: 700;
  vertical-align: -4px;
  line-height: 10px;
}

/* Status bar */
.status {
  position: relative;
  display: flex;
  flex: none;
  height: 16px;
  padding-top: 5px;
}
.status > span {
  flex: none;
  padding-left: 5px;
  border-left: 1px solid #a0a0a0;
  white-space: nowrap;
}
.status > .help {
  width: 235px;
  padding: 0;
  border: 0;
  text-indent: -8px;
}
.s-136 {
  width: 136px;
}
.s-116 {
  width: 116px;
}
.s-82 {
  width: 82px;
}
.s-80 {
  width: 80px;
}
.s-78 {
  width: 78px;
}
.status > .traffic {
  display: flex;
  flex: 1;
  gap: 3px;
  padding-left: 4px;
}
.traffic svg {
  width: 24px;
  height: 13px;
}
.status > .watermark {
  position: absolute;
  right: 5px;
  bottom: 2px;
  border: 0;
  color: #4a4a4a;
  font: 700 19px/20px "Liberation Sans", sans-serif;
}
</style>
